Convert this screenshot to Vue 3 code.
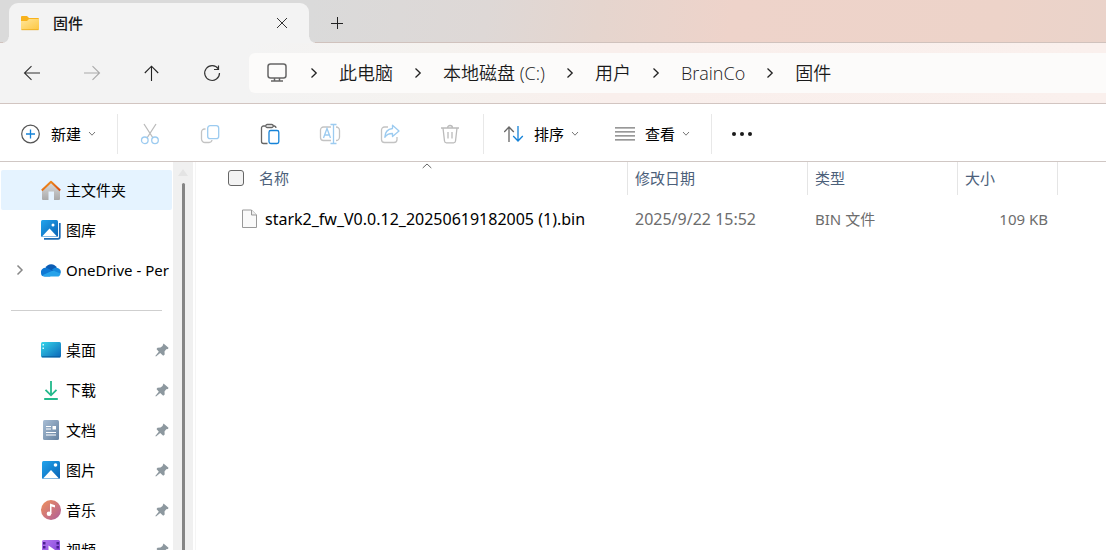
<script setup>
const crumbs = ['此电脑', '本地磁盘 (C:)', '用户', 'BrainCo', '固件']
const pinned = [
  { id: 'desktop', label: '桌面' },
  { id: 'download', label: '下载' },
  { id: 'docs', label: '文档' },
  { id: 'pictures', label: '图片' },
  { id: 'music', label: '音乐' },
  { id: 'video', label: '视频' },
]
</script>

<template>
  <div class="window">
    <header class="chrome">
      <div class="tabbar">
        <div class="tab">
          <svg class="folder" width="20" height="16" viewBox="0 0 20 16">
            <defs>
              <linearGradient id="gFolder" x1="0" y1="0" x2="1" y2="1">
                <stop offset="0" stop-color="#ffe69a" /><stop offset="1" stop-color="#fdc63f" />
              </linearGradient>
            </defs>
            <path d="M1 2a1 1 0 0 1 1-1h5l2 2h9a1 1 0 0 1 1 1v4H1z" fill="#f8b21c" />
            <path d="M1 6h6l2-2h10v10a1 1 0 0 1-1 1H2a1 1 0 0 1-1-1z" fill="url(#gFolder)" />
            <path d="M1.5 14.7h17" stroke="#eba91c" stroke-width=".8" />
          </svg>
          <span class="tab-title">固件</span>
          <button class="plain close" aria-label="关闭标签页">
            <svg width="12" height="12" viewBox="0 0 12 12"><path d="M1 1l10 10M11 1L1 11" stroke="#333" fill="none" /></svg>
          </button>
        </div>
        <button class="plain newtab" aria-label="新建标签页">
          <svg width="14" height="14" viewBox="0 0 14 14"><path d="M1 7.500h12M7.500 1v12" stroke="#222" fill="none" /></svg>
        </button>
      </div>

      <nav class="navbar">
        <div class="nav-buttons">
          <button class="plain" aria-label="后退">
            <svg width="18" height="16" viewBox="0 0 18 16"><path d="M17 8H2M8.500 1.200L1.500 8l7 6.800" stroke="#333" stroke-width="1.100" fill="none" /></svg>
          </button>
          <button class="plain" aria-label="前进" disabled>
            <svg width="18" height="16" viewBox="0 0 18 16"><path d="M1 8h15M9.500 1.200L16.500 8l-7 6.800" stroke="#aaa" stroke-width="1.100" fill="none" /></svg>
          </button>
          <button class="plain" aria-label="向上">
            <svg width="16" height="16" viewBox="0 0 16 16"><path d="M7.500 16V1.500M.8 8l6.700-6.800L14.200 8" stroke="#222" stroke-width="1.100" fill="none" /></svg>
          </button>
          <button class="plain" aria-label="刷新">
            <svg width="18" height="18" viewBox="0 0 18 18"><path d="M15.300 5A7.400 7.400 0 1 0 16.500 9M15.500 1.500v4h-4.500" stroke="#333" stroke-width="1.200" fill="none" /></svg>
          </button>
        </div>
        <div class="address">
          <svg class="monitor" width="20" height="20" viewBox="0 0 20 20" fill="none" stroke="#666" stroke-width="1.500">
            <rect x="1" y="1" width="18" height="14" rx="2.500" /><path d="M7.500 15v3M12.500 15v3M4 18h12" />
          </svg>
          <template v-for="c in crumbs" :key="c">
            <svg class="sep-arrow" width="8" height="12" viewBox="0 0 8 12"><path d="M1.500 1.500L6.200 6l-4.700 4.500" stroke="#222" stroke-width="1.300" fill="none" /></svg>
            <a class="crumb" href="#">{{ c }}</a>
          </template>
        </div>
      </nav>
    </header>

    <div class="toolbar">
      <button class="plain labelled">
        <svg width="20" height="20" viewBox="0 0 20 20" fill="none">
          <circle cx="9.500" cy="10" r="8.800" stroke="#555" stroke-width="1.200" /><path d="M9.500 5.500v9M5 10h9" stroke="#1583d8" stroke-width="1.300" />
        </svg>
        <span>新建</span>
        <svg class="chev" width="8" height="6" viewBox="0 0 8 6"><path d="M1 1l3 3.200L7 1" stroke="#777" fill="none" /></svg>
      </button>
      <i class="rule"></i>
      <button class="plain tool" aria-label="剪切" disabled>
        <svg width="20" height="22" viewBox="0 0 20 22" fill="none" stroke-width="1.300">
          <path d="M4 1l9 14M16 1L7 15" stroke="#bbb" /><circle cx="4.800" cy="17.300" r="3.300" stroke="#9ccbf0" /><circle cx="15" cy="17.300" r="3.300" stroke="#9ccbf0" />
        </svg>
      </button>
      <button class="plain tool" aria-label="复制" disabled>
        <svg width="20" height="20" viewBox="0 0 20 20" fill="none" stroke-width="1.300">
          <path d="M5.500 5H4.500A3 3 0 0 0 1.500 8v7a3.500 3.500 0 0 0 3.500 3.500h4a3 3 0 0 0 3-2.500" stroke="#c3c3c3" /><rect x="7.700" y="1.700" width="11" height="13" rx="2.500" stroke="#9ccbf0" />
        </svg>
      </button>
      <button class="plain tool" aria-label="粘贴">
        <svg width="20" height="22" viewBox="0 0 20 22" fill="none" stroke-width="1.300">
          <path d="M5.500 3H3.500a2 2 0 0 0-2 2v13.500a2 2 0 0 0 2 2H7.500M13 3h1.500a2 2 0 0 1 1.500 2" stroke="#666" /><rect x="5.700" y="1.500" width="7.500" height="3" rx="1.500" stroke="#666" /><rect x="9" y="7.500" width="9.800" height="13" rx="1.800" stroke="#1683d8" />
        </svg>
      </button>
      <button class="plain tool" aria-label="重命名" disabled>
        <svg width="22" height="22" viewBox="0 0 22 22" fill="none" stroke-width="1.300">
          <path d="M12 4H4.500a3 3 0 0 0-3 3v7.500a3 3 0 0 0 3 3H12M17 4a3.500 3.500 0 0 1 3.500 3.500v6.500a3.500 3.500 0 0 1-3.500 3.500" stroke="#c3c3c3" /><path d="M4.500 15l3.500-9.500L11.500 15M5.700 12h4.700M14.500 1.500v19M11.500 1.500h6M11.500 20.500h6" stroke="#9ccbf0" />
        </svg>
      </button>
      <button class="plain tool" aria-label="共享" disabled>
        <svg width="20" height="20" viewBox="0 0 20 20" fill="none" stroke-width="1.300" stroke-linejoin="round">
          <path d="M8 3H4.500a3 3 0 0 0-3 3v9.500a3 3 0 0 0 3 3H14a3 3 0 0 0 3-3V13" stroke="#c3c3c3" /><path d="M12.500 1.200L19 7l-6.500 5.500V9.500C9 9.500 6.500 10.500 4.800 13.300 5 8.500 7.500 5 12.500 4.500z" stroke="#9ccbf0" />
        </svg>
      </button>
      <button class="plain tool" aria-label="删除" disabled>
        <svg width="20" height="20" viewBox="0 0 20 20" fill="none" stroke="#bbb" stroke-width="1.300">
          <path d="M1 4h18M3 4l1.500 13a2 2 0 0 0 2 1.800h7a2 2 0 0 0 2-1.800L17 4M7.500 4a2.500 2.500 0 0 1 5 0M8 8v6.500M12 8v6.500" />
        </svg>
      </button>
      <i class="rule"></i>
      <button class="plain labelled">
        <svg width="20" height="18" viewBox="0 0 20 18" fill="none" stroke-width="1.300">
          <path d="M5 17V2M.2 7L5 2l4.800 5" stroke="#666" /><path d="M14 1v15M9.200 11l4.800 5 4.800-5" stroke="#1683d8" />
        </svg>
        <span>排序</span>
        <svg class="chev" width="8" height="6" viewBox="0 0 8 6"><path d="M1 1l3 3.200L7 1" stroke="#777" fill="none" /></svg>
      </button>
      <button class="plain labelled">
        <svg width="20" height="14" viewBox="0 0 20 14"><path d="M0 .8h20M0 4.800h20M0 8.800h20M0 12.800h20" stroke="#777" stroke-width="1.200" /></svg>
        <span>查看</span>
        <svg class="chev" width="8" height="6" viewBox="0 0 8 6"><path d="M1 1l3 3.200L7 1" stroke="#777" fill="none" /></svg>
      </button>
      <i class="rule"></i>
      <button class="plain more" aria-label="更多">
        <svg width="20" height="4" viewBox="0 0 20 4" fill="#1a1a1a"><circle cx="2" cy="2" r="2" /><circle cx="10" cy="2" r="2" /><circle cx="18" cy="2" r="2" /></svg>
      </button>
    </div>

    <div class="body">
      <aside class="side">
        <a class="item active" href="#">
          <svg width="20" height="20" viewBox="0 0 20 20">
            <defs>
              <linearGradient id="gHome" x1="0" y1="0" x2="0" y2="1"><stop offset="0" stop-color="#dedede" /><stop offset="1" stop-color="#a9a9a9" /></linearGradient>
              <linearGradient id="gRoof" x1="0" y1="0" x2="1" y2="1"><stop offset="0" stop-color="#f79a1e" /><stop offset="1" stop-color="#d64b12" /></linearGradient>
            </defs>
            <path d="M1 9l9-7.500L19 9v10a1 1 0 0 1-1 1h-5v-8.500H7.500V20H2a1 1 0 0 1-1-1z" fill="url(#gHome)" />
            <path d="M.8 10.500L10 1.800l9.200 8.700" fill="none" stroke="url(#gRoof)" stroke-width="2" stroke-linejoin="round" />
          </svg>
          <span>主文件夹</span>
        </a>
        <a class="item" href="#">
          <svg width="20" height="20" viewBox="0 0 20 20">
            <defs><linearGradient id="gPic" x1="0" y1="0" x2="1" y2="1"><stop offset="0" stop-color="#22a4ec" /><stop offset="1" stop-color="#0862b5" /></linearGradient></defs>
            <path d="M18.800 3v14a1.800 1.800 0 0 1-1.800 1.800H3" stroke="#1b6bb5" stroke-width="1.700" fill="none" />
            <rect width="17" height="17" rx="1.500" fill="url(#gPic)" /><path d="M1 16.500L8.500 8.500l7.500 8z" fill="#fff" /><circle cx="12" cy="5" r="1.500" fill="#fff" />
          </svg>
          <span>图库</span>
        </a>
        <a class="item" href="#">
          <svg class="expand" width="8" height="12" viewBox="0 0 8 12"><path d="M1.500 1.500L6 6l-4.500 4.500" stroke="#888" stroke-width="1.500" fill="none" /></svg>
          <svg width="20" height="20" viewBox="0 0 20 20">
            <path d="M4.500 8a6.200 6.200 0 0 1 11.300 0l-5 5z" fill="#0b5cb4" /><path d="M0 13a4.500 4.500 0 0 1 5.500-5.200L14 12 9 16.500H3.500A3.500 3.500 0 0 1 0 13z" fill="#0f78d4" /><path d="M1.300 15.300L12 10.600c1.500-.6 3-.6 4.500.2l3 2.600a3.400 3.400 0 0 1-3.500 3.100H4a4 4 0 0 1-2.700-1.200z" fill="#27a3ea" /><path d="M11 9.800c1.500-2.300 4.500-2.500 5.500-1.800a4 4 0 0 1 3 5.500l-5-2z" fill="#1588dc" />
          </svg>
          <span>OneDrive - Per</span>
        </a>
        <hr />
        <a v-for="p in pinned" :key="p.id" class="item" href="#">
          <svg v-if="p.id === 'desktop'" width="20" height="20" viewBox="0 0 20 20">
            <defs><linearGradient id="gDesk" x1="0" y1="0" x2="1" y2="1"><stop offset="0" stop-color="#35d6ea" /><stop offset="1" stop-color="#0c65b8" /></linearGradient></defs>
            <rect y="2" width="20" height="15.500" rx="1.500" fill="url(#gDesk)" /><path d="M1.500 4h1.500v1.500H1.500zM1.500 7.500h1.500V9H1.500z" fill="#d5fbff" /><path d="M1 16.800h18" stroke="#0a5c9c" />
          </svg>
          <svg v-else-if="p.id === 'download'" width="20" height="20" viewBox="0 0 20 20">
            <path d="M10 1v14M4.500 9.800l5.500 5.500 5.500-5.500M3.200 19h13.600" fill="none" stroke="#22b98b" stroke-width="1.800" />
          </svg>
          <svg v-else-if="p.id === 'docs'" width="20" height="20" viewBox="0 0 20 20">
            <defs><linearGradient id="gDoc" x1="0" y1="0" x2="1" y2="1"><stop offset="0" stop-color="#a8bdd4" /><stop offset="1" stop-color="#64819f" /></linearGradient></defs>
            <rect x="2" width="16" height="20" rx="1.500" fill="url(#gDoc)" /><path d="M5 6.500h5M5 9h5M5 12.500h10M5 15h10" stroke="#fff" stroke-width="1.100" /><path d="M11.500 6H15v3.500h-3.500z" fill="#fff" />
          </svg>
          <svg v-else-if="p.id === 'pictures'" width="20" height="20" viewBox="0 0 20 20">
            <rect x="1" y="1" width="18" height="18" rx="1.500" fill="url(#gPic)" /><path d="M2 18.500l8-8.500 8 8.500z" fill="#fff" /><circle cx="14.500" cy="5" r="1.800" fill="#fff" />
          </svg>
          <svg v-else-if="p.id === 'music'" width="20" height="20" viewBox="0 0 20 20">
            <defs><linearGradient id="gMus" x1="0" y1="0" x2="1" y2="1"><stop offset="0" stop-color="#f0915a" /><stop offset="1" stop-color="#ae5d9b" /></linearGradient></defs>
            <circle cx="10" cy="10" r="10" fill="url(#gMus)" /><circle cx="8" cy="13.700" r="2.300" fill="#fff" /><path d="M9 14V3.500l5 1.800v2.200l-3.500-1V14z" fill="#fff" />
          </svg>
          <svg v-else width="20" height="20" viewBox="0 0 20 20">
            <defs><linearGradient id="gVid" x1="0" y1="0" x2="1" y2="1"><stop offset="0" stop-color="#b57af0" /><stop offset="1" stop-color="#7b3ad6" /></linearGradient></defs>
            <rect x="1" width="18" height="19" rx="1.500" fill="url(#gVid)" /><path d="M2 2h2.500v2.500H2zM2 6h2.500v2.500H2zM2 10h2.500v2.500H2zM15.500 2H18v2.500h-2.500zM15.500 6H18v2.500h-2.500zM15.500 10H18v2.500h-2.500z" fill="#4a2191" /><path d="M7.500 5.500L14 10l-6.500 4z" fill="#fff" />
          </svg>
          <span>{{ p.label }}</span>
          <svg class="pin" width="14" height="14" viewBox="0 0 14 14"><path d="M8.500.5l5 4.300-.5 1.200-1.800.2L9.500 8.500l.2 3-1.500 1.200-3-2.700L1 13.500l-.7-.6L3.800 8.700 1.500 6l1-1.300 3-.1L7.500 3z" fill="#8d989f" /></svg>
        </a>
      </aside>
      <div class="scroll"><i class="up"></i><i class="thumb"></i></div>

      <main class="files">
        <svg class="sort-mark" width="10" height="6" viewBox="0 0 10 6"><path d="M.7 5L5 1l4.300 4" stroke="#666" fill="none" /></svg>
        <table>
          <colgroup><col class="c-name" /><col class="c-date" /><col class="c-type" /><col class="c-size" /></colgroup>
          <thead>
            <tr>
              <th><label class="check"><input type="checkbox" />名称</label></th>
              <th>修改日期</th><th>类型</th><th>大小</th>
            </tr>
          </thead>
          <tbody>
            <tr>
              <td class="name">
                <span class="file">
                  <svg width="16" height="20" viewBox="0 0 16 20"><path d="M1.500 1h9l5 5v12.500h-14z" fill="#fafafa" stroke="#999" /><path d="M10.500 1v5h5" fill="#eee" stroke="#999" /></svg>
                  stark2_fw_V0.0.12_20250619182005 (1).bin
                </span>
              </td>
              <td class="date">2025/9/22 15:52</td><td>BIN 文件</td><td class="num">109 KB</td>
            </tr>
          </tbody>
        </table>
      </main>
    </div>
  </div>
</template>

<style>
body { margin: 0; overflow: hidden; }
</style>

<style scoped>
* { box-sizing: border-box; }
.window {
  height: 100vh;
  display: flex;
  flex-direction: column;
  overflow: hidden;
  background: #fff;
  color: #000;
  font: 15px/20px "Noto Sans", "Noto Sans CJK SC", sans-serif;
}
svg { display: block; flex: none; }
a { color: inherit; text-decoration: none; }
.plain {
  display: flex;
  align-items: center;
  justify-content: center;
  padding: 0;
  border: 0;
  background: none;
  color: inherit;
  font: inherit;
}
.tabbar {
  display: flex;
  align-items: flex-end;
  height: 43px;
  padding-left: 9px;
  background: linear-gradient(98deg, #dadada 28%, #ded8d6 44%, #e5d5ce 54%, #eed3ca 66%, #edd3c9 90%, #ead3ca);
  box-shadow: inset 0 -1px #d0c2bd;
}
.tab {
  position: relative;
  display: flex;
  align-items: center;
  width: 300px;
  height: 40px;
  padding: 0 21px 0 11px;
  border-radius: 9px 9px 0 0;
  background: #f3f3f3;
}
.tab::before, .tab::after {
  content: "";
  position: absolute;
  bottom: 0;
  width: 6px;
  height: 6px;
}
.tab::before { right: 100%; background: radial-gradient(circle at 0 0, transparent 5px, #f3f3f3 6px); }
.tab::after { left: 100%; background: radial-gradient(circle at 100% 0, transparent 5px, #f3f3f3 6px); }
.tab-title { margin-left: 13px; font-weight: 500; color: #1a1a1a; }
.close { margin-left: auto; }
.newtab { width: 56px; height: 40px; }
.navbar {
  display: flex;
  align-items: center;
  height: 61px;
  border-bottom: 1px solid #d2c5c1;
  background: linear-gradient(90deg, #f3f3f3 22%, #f5f2ef 40%, #f9efec 55%, #faf0ed);
}
.nav-buttons {
  display: flex;
  flex: none;
  width: 249px;
  padding-left: 2px;
}
.nav-buttons button { width: 60px; height: 40px; }
.address {
  display: flex;
  flex: 1;
  align-items: center;
  gap: 21px;
  height: 40px;
  padding-left: 18px;
  border-radius: 6px 0 0 6px;
  background: #fcfbfa;
  white-space: nowrap;
}
.monitor { margin-right: 2px; }
.crumb { font: 350 18px/24px "Open Sans", "Noto Sans CJK SC", sans-serif; color: #1a1a1a; }
.toolbar {
  display: flex;
  flex: none;
  align-items: center;
  height: 58px;
  padding: 2px 0 0 3px;
  border-bottom: 1px solid #d0c7c4;
}
.labelled { height: 40px; padding: 0 18px; }
.labelled span { margin: 0 7px 0 10px; }
.tool { width: 60px; height: 40px; }
.more { width: 56px; height: 40px; }
.rule { width: 1px; height: 40px; margin: 0 2px 0 3px; background: #e8e8e8; }
.body { display: flex; flex: 1; min-height: 0; }
.side {
  flex: none;
  width: 173px;
  padding: 8px 1px 0;
  overflow: hidden;
}
.item {
  position: relative;
  display: flex;
  align-items: center;
  height: 40px;
  padding-left: 40px;
  gap: 5px;
  border-radius: 2px;
  white-space: nowrap;
}
.item.active { background: #e5f3ff; }
.expand { position: absolute; left: 15px; }
.pin { margin: 0 3px 0 auto; }
hr {
  height: 1px;
  margin: 20px 10px 19px;
  border: 0;
  background: #cfcfcf;
}
.scroll {
  display: flex;
  flex: none;
  flex-direction: column;
  align-items: center;
  width: 20px;
  padding-top: 7px;
  background: #f0f0f0;
}
.up {
  border: 5px solid transparent;
  border-top: 0;
  border-bottom: 7px solid #e4e4e4;
}
.thumb {
  flex: 1;
  width: 3px;
  margin-top: 7px;
  border-radius: 2px 2px 0 0;
  background: #858585;
}
.files {
  position: relative;
  flex: 1;
  min-width: 0;
  margin-left: 2px;
  padding-left: 32px;
  border-left: 1px solid #f5f5f5;
}
.sort-mark { position: absolute; left: 226px; top: 1px; }
table { border-collapse: separate; border-spacing: 0; table-layout: fixed; width: 830px; }
.c-name { width: 400px; }
.c-date { width: 180px; }
.c-type { width: 150px; }
.c-size { width: 100px; }
th {
  height: 33px;
  padding: 0 0 2px 7px;
  border-right: 1px solid #e5e5e5;
  color: #4c607a;
  font-weight: 400;
  text-align: left;
}
th:first-child { padding-left: 0; }
td { height: 48px; padding: 0 0 0 7px; color: #6d6d6d; white-space: nowrap; }
td.name { padding-left: 13px; font-size: 16px; color: #000; }
td.date { font-size: 16px; }
td.num { padding: 0 10px 0 0; text-align: right; }
.check { display: flex; align-items: center; gap: 15px; }
.check input {
  appearance: none;
  width: 16px;
  height: 16px;
  margin: 0;
  border: 1px solid #666;
  border-radius: 3px;
  background: #f3f3f3;
}
.file { display: flex; align-items: center; gap: 8px; }
</style>
